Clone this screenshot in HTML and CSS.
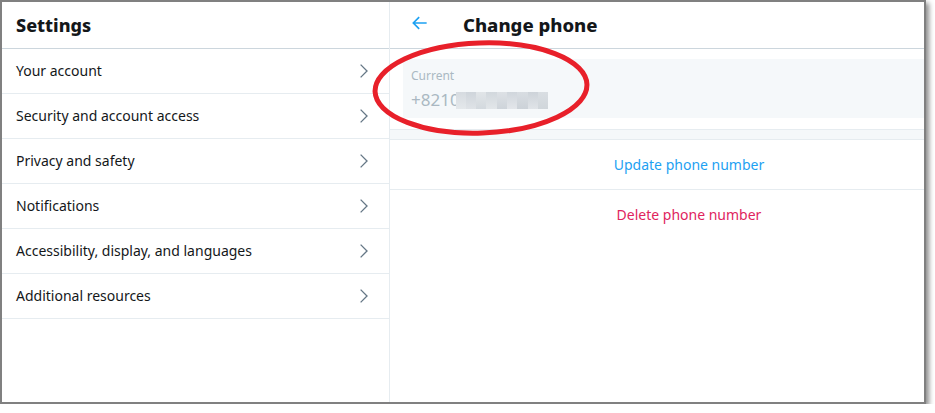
FILE: index.html
```html
<!DOCTYPE html>
<html>
<head>
<meta charset="utf-8">
<link rel="stylesheet" href="styles.css">
</head>
<body>
<div class="frame">
  <aside class="nav">
    <div class="nav-head"><h1>Settings</h1></div>
    <ul class="nav-list">
      <li class="nav-item"><span>Your account</span><svg class="chev" viewBox="0 0 24 24"><path d="M7.5 3.5l8.5 8.5-8.5 8.5"/></svg></li>
      <li class="nav-item"><span>Security and account access</span><svg class="chev" viewBox="0 0 24 24"><path d="M7.5 3.5l8.5 8.5-8.5 8.5"/></svg></li>
      <li class="nav-item"><span>Privacy and safety</span><svg class="chev" viewBox="0 0 24 24"><path d="M7.5 3.5l8.5 8.5-8.5 8.5"/></svg></li>
      <li class="nav-item"><span>Notifications</span><svg class="chev" viewBox="0 0 24 24"><path d="M7.5 3.5l8.5 8.5-8.5 8.5"/></svg></li>
      <li class="nav-item"><span>Accessibility, display, and languages</span><svg class="chev" viewBox="0 0 24 24"><path d="M7.5 3.5l8.5 8.5-8.5 8.5"/></svg></li>
      <li class="nav-item"><span>Additional resources</span><svg class="chev" viewBox="0 0 24 24"><path d="M7.5 3.5l8.5 8.5-8.5 8.5"/></svg></li>
    </ul>
  </aside>
  <main class="detail">
    <div class="detail-head">
      <svg class="back" viewBox="0 0 24 24"><path d="M20 12H4.5M11 5l-7 7 7 7"/></svg>
      <h2>Change phone</h2>
    </div>
    <div class="current-wrap">
      <div class="current">
        <div class="label">Current</div>
        <div class="phone"><span>+8210</span><span class="blur"><i class="b1"></i><i class="b2"></i><i class="b3"></i><i class="b4"></i><i class="b5"></i><i class="b6"></i><i class="b7"></i><i class="b8"></i><i class="b9"></i></span></div>
      </div>
    </div>
    <div class="spacer"></div>
    <div class="action update">Update phone number</div>
    <div class="action delete">Delete phone number</div>
    <svg class="ring" viewBox="0 0 232 104"><ellipse cx="116" cy="52" rx="106" ry="45"/></svg>
  </main>
</div>
</body>
</html>
```

FILE: styles.css
```css
* { box-sizing: border-box; }
html, body { margin: 0; padding: 0; background: #fff; }
body { font-family: "Noto Sans", "Open Sans", sans-serif; color: #14171a; }

.frame {
  position: relative;
  width: 926px;
  height: 404px;
  border: 2px solid #808080;
  display: flex;
  background: #fff;
  box-shadow: 3px 3px 5px rgba(0,0,0,0.45);
}

.nav {
  width: 388px;
  border-right: 1px solid #e6ecf0;
  display: flex;
  flex-direction: column;
}
.nav-head {
  height: 47px;
  border-bottom: 1px solid #ccd6dd;
  display: flex;
  align-items: center;
  padding-left: 14px;
}
.nav-head h1 {
  margin: 0;
  font-size: 18px;
  font-weight: 800;
  line-height: 1;
  color: #14171a;
}
.nav-list { list-style: none; margin: 0; padding: 0; }
.nav-item {
  height: 45px;
  border-bottom: 1px solid #e6ecf0;
  display: flex;
  align-items: center;
  justify-content: space-between;
  padding: 0 16px 1px 14px;
  font-size: 14px;
  color: #14171a;
}
.chev {
  width: 18px;
  height: 18px;
  fill: none;
  stroke: #657786;
  stroke-width: 1.8;
}

.detail {
  position: relative;
  flex: 1;
  display: flex;
  flex-direction: column;
}
.detail-head {
  height: 47px;
  border-bottom: 1px solid #ccd6dd;
  display: flex;
  align-items: center;
  padding-left: 20px;
}
.back {
  width: 20px;
  height: 20px;
  fill: none;
  stroke: #1da1f2;
  stroke-width: 2;
  margin-top: -5px;
}
.detail-head h2 {
  margin: 0 0 0 33px;
  font-size: 18.5px;
  font-weight: 800;
  line-height: 1;
}
.current-wrap {
  padding: 10px 0 0 13px;
  border-bottom: 1px solid #e6ecf0;
}
.current {
  background: #f5f8fa;
  height: 59px;
  padding: 9px 8px 0 8px;
  margin-bottom: 11px;
}
.label {
  font-size: 12px;
  color: #aab8c2;
  line-height: 16px;
}
.phone {
  font-size: 17px;
  color: #aab8c2;
  line-height: 24px;
  margin-top: 4px;
  display: flex;
  align-items: center;
}
.blur { display: inline-flex; height: 17px; margin-top: 1px; margin-left: -4px; }
.blur i { display: block; height: 17px; }
.b1 { width: 10px; background: linear-gradient(#d6dbe0, #e4e8eb); }
.b2 { width: 10px; background: linear-gradient(#cfd5db, #dfe3e7); }
.b3 { width: 10px; background: linear-gradient(#e1e5e8, #d3d9de); }
.b4 { width: 11px; background: linear-gradient(#d2d8dd, #e2e6e9); }
.b5 { width: 10px; background: linear-gradient(#dde1e5, #ced4da); }
.b6 { width: 10px; background: linear-gradient(#d0d6dc, #e3e6ea); }
.b7 { width: 11px; background: linear-gradient(#d8dde2, #ccd2d8); }
.b8 { width: 10px; background: linear-gradient(#cdd3d9, #e0e4e8); }
.b9 { width: 10px; background: linear-gradient(#d9dee2, #d0d6db); }

.spacer {
  height: 10px;
  background: #f5f8fa;
  border-bottom: 1px solid #e6ecf0;
}
.action {
  height: 50px;
  display: flex;
  align-items: center;
  justify-content: center;
  padding-left: 64px;
  padding-bottom: 1px;
  font-size: 14px;
  border-bottom: 1px solid #e6ecf0;
}
.update { color: #1da1f2; }
.delete { color: #e0245e; border-bottom: none; }

.ring {
  position: absolute;
  left: -25px;
  top: 34px;
  width: 232px;
  height: 104px;
  fill: none;
  stroke: #e8202a;
  stroke-width: 5;
  transform: rotate(-2deg);
}
```
